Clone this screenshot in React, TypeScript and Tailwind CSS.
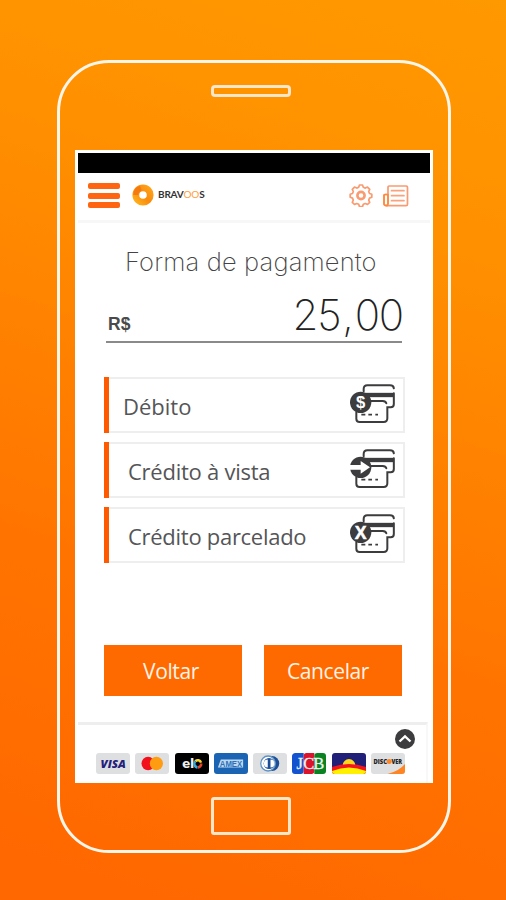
import type { ReactNode } from "react";

const INK = "#3c3c3e";

function Gear() {
  return (
    <svg className="h-[24px] w-[24px]" viewBox="0 0 24 24" fill="none" stroke="#f99a70" strokeWidth="1.700" strokeLinejoin="round">
      <path d="M10.500 2h3l.8 2.300 2 .8 2.200-1 2.200 2.200-1 2.200.8 2 2.300.8v3l-2.300.8-.8 2 1 2.200-2.200 2.200-2.200-1-2 .8-.8 2.300h-3l-.8-2.300-2-.8-2.200 1-2.200-2.200 1-2.200-.8-2-2.300-.8v-3l2.300-.8.8-2-1-2.200 2.200-2.200 2.200 1 2-.8z" />
      <circle cx="12" cy="12.500" r="3.600" strokeWidth="2.600" />
    </svg>
  );
}

function Newspaper() {
  return (
    <svg className="h-[22px] w-[26px]" viewBox="0 0 26 22" fill="none" stroke="#f99a70" strokeWidth="1.700" strokeLinecap="round" strokeLinejoin="round">
      <path d="M5 18.500V2.200Q5 1 6.200 1h17q1.300 0 1.300 1.300v17q0 1.400-1.300 1.400H3.200Q1 20.700 1 18.500v-8q0-1 1-1h3" />
      <path d="M4 20.700Q1 20.700 1 18.500v-8q0-1 1-1h3v9q0 2-1.800 2" stroke="#ff8a3c" strokeWidth="1.700" />
      <path d="M8.500 5.700h12.500M8.500 10.700h12.500M8.500 15.700h12.500" stroke="#fba27c" />
    </svg>
  );
}

function Ring() {
  return (
    <svg className="h-[22px] w-[22px]" viewBox="0 0 22 22" fill="none">
      <defs>
        <linearGradient id="ring" x1="0" y1="1" x2="1" y2="0">
          <stop offset="0" stopColor="#ffae1a" />
          <stop offset="0.500" stopColor="#f98a0c" />
          <stop offset="1" stopColor="#ffa21a" />
        </linearGradient>
      </defs>
      <circle cx="11" cy="11" r="7.200" stroke="url(#ring)" strokeWidth="6.800" />
      <path d="M3.800 11a7.200 7.200 0 0 1 5-6.900" stroke="#f47a10" strokeWidth="5" />
    </svg>
  );
}

function PayIcon({ children }: { children: ReactNode }) {
  return (
    <svg className="h-[42px] w-[46px]" viewBox="60 39 138 126" fill="none" stroke={INK} strokeWidth="6" strokeLinecap="round">
      <path d="M101 64V57Q101 46 112 46H180Q191 46 191.500 55" />
      <path d="M106 75H190" strokeWidth="13" strokeLinecap="butt" />
      <path d="M191.500 70V102Q191.500 112 182 112H172V145Q172 156 161 156H89Q79 156 79 146V126" />
      <path d="M122 93H158Q167 93 169 100" />
      <path d="M94 134h12M115 134h11M136 134h8" strokeWidth="5" strokeLinecap="butt" />
      <circle cx="92" cy="97" r="32" fill={INK} stroke="none" />
      {children}
    </svg>
  );
}

function Option({ label, indent, children }: { label: string; indent: string; children: ReactNode }) {
  return (
    <div className="flex h-[56px] border-2 border-l-0 border-[#eeeeee]">
      <div className="-my-[2px] w-[5px] bg-[#ff5a00]" />
      <div className={`flex-1 pt-[12px] text-[22px] leading-[30px] whitespace-nowrap text-[#555557] ${indent}`}>{label}</div>
      <div className="mt-[4px] mr-[7px]">
        <PayIcon>{children}</PayIcon>
      </div>
    </div>
  );
}

function Badge({ bg, children }: { bg: string; children: ReactNode }) {
  return (
    <svg className={`h-[21px] w-[34px] rounded-[3px] ${bg}`} viewBox="0 0 35 21" preserveAspectRatio="none">
      {children}
    </svg>
  );
}

export default function App() {
  return (
    <div className="h-[900px] w-[506px] overflow-hidden bg-linear-[18deg,#ff6800_5%,#ff7400_35%,#ff9000_75%,#ff9900] pt-[60px] pl-[57px] font-['Open_Sans','Noto_Sans',sans-serif]">
      <div className="flex h-[793px] w-[394px] flex-col items-center rounded-[52px] border-3 border-[#fff5e8]">
        <div className="mt-[22px] mr-[6px] h-[12px] w-[80px] rounded-[4px] border-[3px] border-[#ffe6c8]" />

        <main className="mt-[53px] h-[633px] w-[358px] bg-white px-[3px] pt-[3px]">
          <div className="h-[20px] w-[352px] bg-black" />
          <header className="flex h-[50px] w-[352px] border-b-3 border-[#f7f7f8]">
            <div className="mt-[10px] ml-[10px] flex h-[25px] w-[32px] flex-col justify-between">
              <div className="h-[6px] rounded-[2px] bg-[#ff6410]" />
              <div className="h-[6px] rounded-[2px] bg-[#ff6410]" />
              <div className="h-[6px] rounded-[2px] bg-[#ff6410]" />
            </div>
            <div className="mt-[11px] ml-[12px]"><Ring /></div>
            <div className="mt-[14px] ml-[4px] w-[48px] font-['Lato',sans-serif] text-[10px] leading-[14px] font-bold tracking-[-0.200px] text-[#333]">
              BRAV<span className="font-normal text-[#ff9c3c]">OO</span>S
            </div>
            <div className="mt-[10px] ml-[143px]"><Gear /></div>
            <div className="mt-[12px] ml-[10px]"><Newspaper /></div>
          </header>

          <h1 className="mt-[23px] ml-[47px] font-['Inter',sans-serif] text-[25.500px] leading-[32px] font-extralight tracking-[0.150px] whitespace-nowrap text-[#444]">
            Forma de pagamento
          </h1>
          <div className="ml-[28px] flex h-[65px] w-[296px] items-baseline justify-between border-b-2 border-[#8a8a8a]">
            <span className="ml-[2px] font-['Liberation_Sans',Arial,sans-serif] text-[17.500px] font-bold text-[#4a4a4a]">R$</span>
            <span className="mt-[7px] -mr-[1px] font-['Inter',sans-serif] text-[42px] leading-[60px] font-extralight tracking-[-1.200px] text-[#222]">
              25<span className="px-[2px]">,</span>00
            </span>
          </div>

          <div className="mt-[34px] ml-[26px] flex w-[301px] flex-col gap-[9px]">
            <Option label="Débito" indent="pl-[14px] tracking-[0px]">
              <text x="92" y="115" fontSize="50" fontWeight="700" textAnchor="middle" fill="#fff" stroke="none" fontFamily="Liberation Sans">$</text>
            </Option>
            <Option label="Crédito à vista" indent="pl-[19px] tracking-[-0.250px]">
              <path d="M60 90H92V78L120 97L92 116V104H60Z" fill="#fff" stroke="none" />
            </Option>
            <Option label="Crédito parcelado" indent="pl-[19px] tracking-[-0.280px]">
              <text x="92" y="116" fontSize="53" fontWeight="700" textAnchor="middle" fill="#fff" stroke="#fff" strokeWidth="1.500" fontFamily="Liberation Sans">X</text>
            </Option>
          </div>

          <div className="mt-[82px] ml-[26px] flex w-[298px] justify-between text-[21px] leading-[50px] tracking-[-0.400px] text-[#fff3e8]">
            <button className="h-[51px] w-[138px] bg-[#ff6a00] pr-[4px] font-medium">Voltar</button>
            <button className="h-[51px] w-[138px] bg-[#ff6a00] pr-[10px] font-medium">Cancelar</button>
          </div>

          <footer className="mt-[26px] h-[61px] w-[350px] border-t-3 border-r-2 border-t-[#eeeeee] border-r-[#f8f8f8]">
            <div className="flex h-[28px] justify-end pt-[4px] pr-[11px]">
              <svg className="h-[20px] w-[20px]" viewBox="0 0 20 20" fill="none">
                <circle cx="10" cy="10" r="10" fill="#3c3c3e" />
                <path d="M4.500 12.500L10 7.300l5.500 5.200" stroke="#fff" strokeWidth="2.300" />
              </svg>
            </div>
            <div className="ml-[18px] flex w-[309px] justify-between">
              <Badge bg="bg-[#dedfe0]">
                <text x="17.700" y="14.800" fontSize="11" fontWeight="800" fontStyle="italic" textLength="26" lengthAdjust="spacingAndGlyphs" textAnchor="middle" fill="#24207c" fontFamily="Open Sans">VISA</text>
              </Badge>
              <Badge bg="bg-[#dedfe0]">
                <circle cx="13.500" cy="10.500" r="6.800" fill="#f2101c" />
                <circle cx="22" cy="10.500" r="6.800" fill="#ff9c12" />
              </Badge>
              <Badge bg="bg-black">
                <text x="7.500" y="15" fontSize="13.500" fontWeight="800" fill="#eee" fontFamily="Lato" textLength="12" lengthAdjust="spacingAndGlyphs">el</text>
                <g fill="none" strokeWidth="2.600">
                  <path d="M21 8.200A3.600 3.600 0 0 1 26.800 9.600" stroke="#f5d328" />
                  <path d="M27 10.500A3.600 3.600 0 0 1 23.600 14.400" stroke="#e8442c" />
                  <path d="M21 8.200A3.600 3.600 0 0 0 23.200 14.400" stroke="#3aa7d8" />
                </g>
              </Badge>
              <Badge bg="bg-[#1b64b4]">
                <path d="M7 6.500H30V14.500H4Z" fill="#bcd8f0" />
                <text x="17.500" y="13.800" fontSize="8.500" fontWeight="700" textAnchor="middle" textLength="23" lengthAdjust="spacingAndGlyphs" fill="#2b70b9" fontFamily="Liberation Sans">AMEX</text>
              </Badge>
              <Badge bg="bg-[#dedfe0]">
                <circle cx="19.500" cy="10.500" r="7.500" fill="#1c4f97" />
                <circle cx="15.500" cy="10.500" r="7.500" fill="#fff" stroke="#5f93c4" strokeWidth="1.300" />
                <circle cx="16.500" cy="10.500" r="5.500" fill="#1c4f97" />
                <path d="M15.200 6.500a4 4 0 0 0 0 8zM18 6.500a4 4 0 0 1 0 8z" fill="#fff" />
              </Badge>
              <Badge bg="bg-white">
                <path d="M0 3q0-3 3-3h9v18q0 3-3 3H0z" fill="#1453cf" />
                <path d="M12 3q0-3 3-3h8v18q0 3-3 3h-8z" fill="#d9142c" />
                <path d="M23 3q0-3 3-3h9v21H23z" fill="#098222" />
                <g fill="#eef4f4" stroke="#eef4f4" strokeWidth="0.300" fontSize="17" fontFamily="Liberation Serif" textAnchor="middle">
                  <text x="8" y="16">J</text><text x="17.300" y="16">C</text><text x="27.500" y="16">B</text>
                </g>
              </Badge>
              <Badge bg="bg-[#202078]">
                <circle cx="17.500" cy="12.500" r="6.500" fill="#ffd61c" />
                <path d="M0 14Q17.500 8 35 14V21H0Z" fill="#f5141c" />
                <path d="M0 18Q17.500 11 35 18V21H0Z" fill="#fff000" />
              </Badge>
              <Badge bg="bg-[#dedfe0]">
                <path d="M17 21Q29 18 35 11V21Z" fill="#ff8423" />
                <g fontSize="6.500" fontWeight="800" fill="#222" fontFamily="Open Sans">
                  <text x="2.500" y="10.800" textLength="14" lengthAdjust="spacingAndGlyphs">DISC</text>
                  <text x="21" y="10.800" textLength="11" lengthAdjust="spacingAndGlyphs">VER</text>
                </g>
                <circle cx="18.700" cy="8.500" r="2.600" fill="#ff8423" />
              </Badge>
            </div>
          </footer>
        </main>

        <div className="mt-[14px] mr-[6px] h-[38px] w-[80px] rounded-[3px] border-[3px] border-[#ffe6c8]" />
      </div>
    </div>
  );
}
